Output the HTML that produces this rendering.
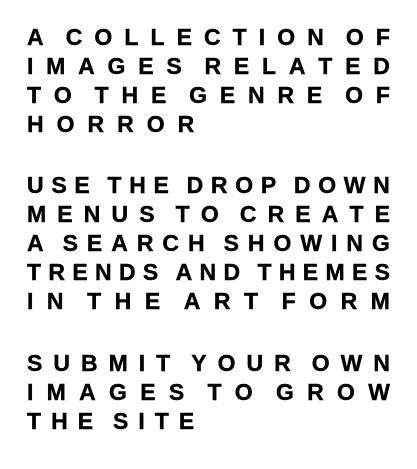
<!DOCTYPE html>
<html><head><meta charset="utf-8"><style>
html,body{margin:0;padding:0;background:#fff;width:417px;height:469px;overflow:hidden}
.l{position:absolute;left:27px;width:363px;height:23px;display:flex;justify-content:space-between;font-family:"Liberation Sans",Arial,sans-serif;font-weight:bold;font-size:23px;line-height:23px;color:#000;-webkit-text-stroke:0.4px #000}
.l span.w{margin-right:10px}
</style></head><body>
<div id="c"></div>
<script>
var lines=[["A COLLECTION OF",29],["IMAGES RELATED",58],["TO THE GENRE OF",87],["HORROR",116,13],
["USE THE DROP DOWN",177],["MENUS TO CREATE",206],["A SEARCH SHOWING",235],["TRENDS AND THEMES",264],["IN THE ART FORM",293],
["SUBMIT YOUR OWN",355],["IMAGES TO GROW",384],["THE SITE",413,10]];
var c=document.getElementById('c'),h='';
lines.forEach(function(l){
 var s='',t=l[0];
 for(var i=0;i<t.length;i++){var ch=t[i];if(ch==' ')continue;s+='<span'+(t[i+1]==' '?' class="w"':'')+'>'+ch+'</span>';}
 var st='top:'+(l[1]-3)+'px;';
 if(l[2]){st+='justify-content:flex-start;gap:'+l[2]+'px;';}
 h+='<div class="l" style="'+st+'">'+s+'</div>';
});
c.innerHTML=h;
</script>
</body></html>
